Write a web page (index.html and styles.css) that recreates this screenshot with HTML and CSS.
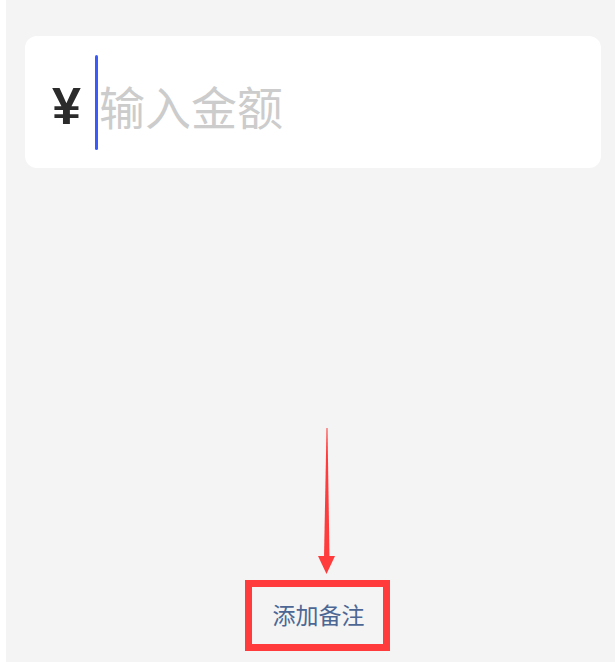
FILE: index.html
```html
<!DOCTYPE html>
<html lang="zh">
<head>
<meta charset="utf-8">
<title>输入金额</title>
<link rel="stylesheet" href="styles.css">
</head>
<body>
<div class="app">
  <div class="card">
    <span class="yen">¥</span>
    <span class="caret"></span>
    <span class="placeholder">输入金额</span>
  </div>
  <div class="footer">
    <span class="note">添加备注</span>
  </div>
  <svg class="arrow" width="24" height="152" viewBox="0 0 24 152" aria-hidden="true">
    <polygon points="11.5,3 12.5,3 14.5,133 9,133" fill="#ff3b3b"/>
    <polygon points="3,131 20,131 11.5,149" fill="#ff3b3b"/>
  </svg>
  <div class="highlight"></div>
</div>
</body>
</html>
```
FILE: styles.css
```css
html, body {
  margin: 0;
  padding: 0;
  background: #ffffff;
}
body {
  font-family: "Noto Sans CJK SC", "Noto Sans", sans-serif;
}
.app {
  position: relative;
  margin-left: 6px;
  height: 662px;
  background: #f4f4f4;
  box-sizing: border-box;
  padding-top: 36px;
  display: flex;
  flex-direction: column;
}
.card {
  margin: 0 14px 0 19px;
  height: 132px;
  border-radius: 12px;
  background: #ffffff;
  display: flex;
  align-items: center;
  padding-left: 27px;
}
.yen {
  font-family: "Liberation Sans", Arial, sans-serif;
  font-weight: bold;
  font-size: 52px;
  color: #2b2b2b;
  line-height: 1;
  margin-top: 8px;
}
.caret {
  width: 3px;
  height: 95px;
  background: #3b5bfd;
  border-radius: 2px;
  margin-left: 14px;
}
.placeholder {
  font-size: 46px;
  color: #cccccc;
  line-height: 1;
  margin-left: 1px;
  margin-top: 6px;
}
.footer {
  margin-top: auto;
  padding: 0 0 33px 16px;
  text-align: center;
}
.note {
  font-size: 23px;
  line-height: 30px;
  color: #4d6794;
}
.arrow {
  position: absolute;
  left: 309px;
  top: 425px;
}
.highlight {
  position: absolute;
  left: 239px;
  top: 580px;
  width: 145px;
  height: 71px;
  box-sizing: border-box;
  border: 7px solid #ff3b3b;
}
```
